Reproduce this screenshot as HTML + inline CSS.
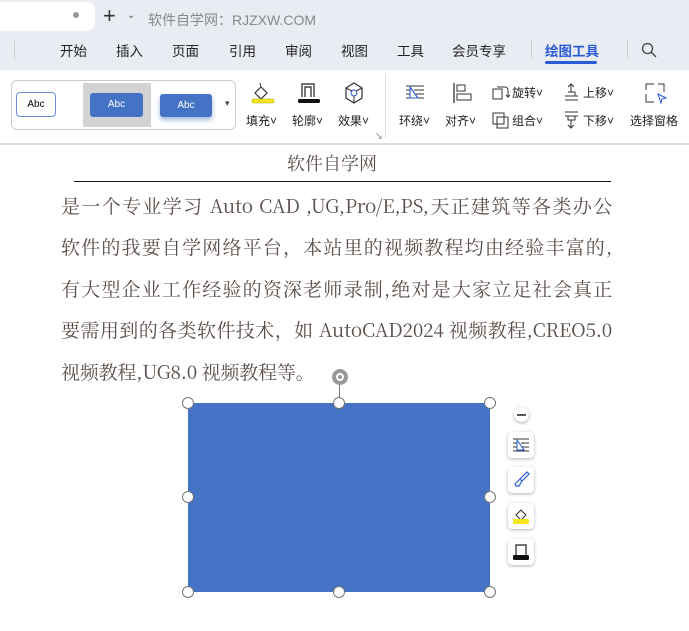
<!DOCTYPE html>
<html><head><meta charset="utf-8"><style>
*{margin:0;padding:0;box-sizing:border-box}
body{width:689px;height:631px;overflow:hidden;background:#fff;font-family:"Liberation Sans","Noto Sans CJK SC",sans-serif;position:relative}
.a{position:absolute}
.top{left:0;top:0;width:689px;height:70px;background:#e9edf3}
.tab{left:-10px;top:2px;width:105px;height:29px;background:#fff;border-radius:0 8px 8px 0}
.menu span{position:absolute;top:40px;font-size:13.5px;color:#222}
.rib{left:0;top:70px;width:689px;height:75px;background:#fff;border-bottom:2px solid #dcdcdc}
.s{font-size:12px;color:#222}
.line{position:absolute;left:61px;width:551px;font-family:"Noto Serif CJK SC","Liberation Serif",serif;font-size:19px;color:#5a4e48;text-align:justify;text-align-last:justify;white-space:nowrap;letter-spacing:-0.2px}
.h{position:absolute;width:12px;height:12px;border-radius:50%;background:#fff;border:1px solid #777}
.sb{position:absolute;left:508px;width:26px;height:26px;background:#fff;border-radius:4px;box-shadow:0 1px 3px rgba(0,0,0,.3)}
</style></head><body>
<div class="a top"></div>
<div class="a tab"></div>
<div class="a" style="left:73px;top:12px;width:6px;height:6px;border-radius:50%;background:#999"></div>
<div class="a" style="left:103px;top:3px;font-size:22px;color:#333">+</div>
<div class="a" style="left:127px;top:10px;font-size:10px;color:#555">⌄</div>
<div class="a" style="left:148px;top:10px;font-size:14px;color:#888">软件自学网：RJZXW.COM</div>
<div class="a" style="left:14px;top:41px;width:1px;height:18px;background:#ccc"></div>
<div class="menu">
<span style="left:60px">开始</span><span style="left:116px">插入</span><span style="left:172px">页面</span><span style="left:229px">引用</span><span style="left:285px">审阅</span><span style="left:341px">视图</span><span style="left:397px">工具</span><span style="left:452px">会员专享</span>
<span style="left:545px;color:#2a5bd7;font-weight:bold">绘图工具</span></div>
<div class="a" style="left:531px;top:41px;width:1px;height:18px;background:#ccc"></div>
<div class="a" style="left:545px;top:61px;width:52px;height:3px;background:#2a5bd7;border-radius:2px"></div>
<div class="a" style="left:627px;top:41px;width:1px;height:18px;background:#ccc"></div>
<svg class="a" style="left:641px;top:42px" width="16" height="16"><circle cx="6.5" cy="6.5" r="5" fill="none" stroke="#444" stroke-width="1.3"/><path d="M10 10L15 15" stroke="#444" stroke-width="1.3"/></svg>
<div class="a rib"></div>
<div class="a" style="left:11px;top:80px;width:225px;height:50px;border:1px solid #ccc;border-radius:6px"></div>
<div class="a" style="left:16px;top:92px;width:40px;height:25px;border:1.5px solid #6a8fd8;border-radius:4px;font-size:10px;display:flex;align-items:center;justify-content:center">Abc</div>
<div class="a" style="left:83px;top:83px;width:68px;height:44px;background:#d3d3d3"></div>
<div class="a" style="left:90px;top:93px;width:53px;height:24px;background:#4472c4;border-radius:3px;color:#fff;font-size:10px;text-align:center;line-height:24px">Abc</div>
<div class="a" style="left:160px;top:94px;width:52px;height:23px;background:#4472c4;border-radius:3px;color:#fff;font-size:10px;text-align:center;line-height:23px;box-shadow:0 3px 5px rgba(68,114,196,.5),0 0 0 1px #fff">Abc</div>
<div class="a" style="left:225px;top:98px;font-size:9px;color:#444">▾</div>
<svg class="a" style="left:250px;top:81px" width="26" height="24"><path d="M5 12l6-6 6 6-6 6z" fill="none" stroke="#333" stroke-width="1.2"/><path d="M11 6l-1-4" stroke="#333"/><rect x="2" y="18" width="22" height="4" rx="1" fill="#f5e61e" stroke="#aa0" stroke-width=".5"/></svg>
<svg class="a" style="left:296px;top:81px" width="26" height="24"><path d="M6 16V3h12v13M9 16V6h6v10" fill="none" stroke="#222" stroke-width="1.2"/><rect x="2" y="18" width="22" height="4" rx="1.5" fill="#111"/></svg>
<svg class="a" style="left:343px;top:81px" width="22" height="24"><path d="M11 2l8 5v10l-8 5-8-5V7z" fill="none" stroke="#333" stroke-width="1.2"/><circle cx="11" cy="12" r="3" fill="none" stroke="#2a5bd7"/><path d="M3 7l6 3M19 7l-6 3M11 15v7" stroke="#333"/></svg>
<div class="a s" style="left:246px;top:112px">填充˅</div>
<div class="a s" style="left:292px;top:112px">轮廓˅</div>
<div class="a s" style="left:338px;top:112px">效果˅</div>
<div class="a" style="left:375px;top:131px;font-size:8px;color:#666">↘</div>
<div class="a" style="left:385px;top:74px;width:1px;height:64px;background:#ddd"></div>
<svg class="a" style="left:404px;top:84px" width="22" height="18"><path d="M2 2h18M10 6h10M12 10h8M2 14h18M2 6h4M2 10h4" stroke="#333"/><path d="M6 3l8 11H6z" fill="none" stroke="#2a5bd7" stroke-width="1.1"/></svg>
<svg class="a" style="left:452px;top:82px" width="22" height="22"><path d="M2 1v20" stroke="#333" stroke-width="1.3"/><rect x="5" y="3" width="8" height="6" fill="none" stroke="#333"/><rect x="5" y="12" width="14" height="6" fill="none" stroke="#333"/></svg>
<div class="a s" style="left:399px;top:112px">环绕˅</div>
<div class="a s" style="left:445px;top:112px">对齐˅</div>
<svg class="a" style="left:491px;top:84px" width="20" height="18"><rect x="2" y="5" width="9" height="10" fill="none" stroke="#333"/><path d="M6 3h8a3 3 0 013 3v7l-2-2M17 13l2-2" fill="none" stroke="#333"/></svg>
<div class="a s" style="left:512px;top:84px">旋转˅</div>
<svg class="a" style="left:491px;top:111px" width="20" height="18"><rect x="2" y="2" width="11" height="11" fill="none" stroke="#333"/><rect x="6" y="6" width="11" height="11" fill="none" stroke="#333"/></svg>
<div class="a s" style="left:512px;top:112px">组合˅</div>
<svg class="a" style="left:562px;top:82px" width="18" height="20"><path d="M3 14h13M3 18h13M6 10h7v4M9 10V2M6 5l3-3 3 3" fill="none" stroke="#333"/></svg>
<div class="a s" style="left:583px;top:84px">上移˅</div>
<svg class="a" style="left:562px;top:110px" width="18" height="20"><path d="M3 2h13M3 6h13M6 6v4h7V6M9 10v8M6 15l3 3 3-3" fill="none" stroke="#333"/></svg>
<div class="a s" style="left:583px;top:112px">下移˅</div>
<svg class="a" style="left:644px;top:82px" width="24" height="22"><path d="M2 8V2h8M14 2h6v8M2 12v8h8" fill="none" stroke="#333"/><path d="M14 12l8 4-4 1-1 4z" fill="none" stroke="#2a5bd7"/></svg>
<div class="a s" style="left:630px;top:112px">选择窗格</div>

<div class="a" style="left:287px;top:150px;font-family:'Noto Serif CJK SC',serif;font-size:18px;color:#5a4e48">软件自学网</div>
<div class="a" style="left:74px;top:181px;width:537px;height:1px;background:#111"></div>
<div class="line" style="top:192px">是一个专业学习 Auto CAD ,UG,Pro/E,PS,天正建筑等各类办公</div>
<div class="line" style="top:233px">软件的我要自学网络平台，本站里的视频教程均由经验丰富的,</div>
<div class="line" style="top:275px">有大型企业工作经验的资深老师录制,绝对是大家立足社会真正</div>
<div class="line" style="top:316px">要需用到的各类软件技术，如 AutoCAD2024 视频教程,CREO5.0</div>
<div class="line" style="top:358px;text-align-last:left">视频教程,UG8.0 视频教程等。</div>

<div class="a" style="left:188px;top:403px;width:302px;height:189px;background:#4472c4"></div>
<div class="a" style="left:339px;top:385px;width:1px;height:18px;background:#777"></div>
<div class="a" style="left:332px;top:369px;width:16px;height:16px;border-radius:50%;background:#999"></div>
<div class="a" style="left:336px;top:373px;width:8px;height:8px;border-radius:50%;border:2px solid #fff"></div>
<div class="h" style="left:182px;top:397px"></div><div class="h" style="left:333px;top:397px"></div><div class="h" style="left:484px;top:397px"></div>
<div class="h" style="left:182px;top:491px"></div><div class="h" style="left:484px;top:491px"></div>
<div class="h" style="left:182px;top:586px"></div><div class="h" style="left:333px;top:586px"></div><div class="h" style="left:484px;top:586px"></div>
<div class="a" style="left:514px;top:407px;width:15px;height:15px;border-radius:50%;background:#fff;box-shadow:0 1px 3px rgba(0,0,0,.35)"></div>
<div class="a" style="left:517px;top:414px;width:9px;height:1.5px;background:#555"></div>
<div class="sb" style="top:432px"><svg width="26" height="26"><path d="M5 7h16M13 11h8M14 15h7M5 19h16M5 11h4M5 15h4" stroke="#333"/><path d="M9 8l7 10H9z" fill="none" stroke="#2a5bd7"/></svg></div>
<div class="sb" style="top:467px"><svg width="26" height="26"><path d="M19 5l2 2-7 7-2-2z M12 12l-5 5 1 2 3 0 3-5" fill="none" stroke="#2a5bd7" stroke-width="1.2"/></svg></div>
<div class="sb" style="top:503px"><svg width="26" height="26"><path d="M8 12l5-5 5 5-5 5z" fill="none" stroke="#333"/><rect x="5" y="16" width="16" height="5" rx="1" fill="#f5e61e"/></svg></div>
<div class="sb" style="top:539px"><svg width="26" height="26"><path d="M8 17V6h10v11" fill="none" stroke="#222" stroke-width="1.2"/><rect x="5" y="16" width="16" height="5" rx="1.5" fill="#111"/></svg></div>
</body></html>
